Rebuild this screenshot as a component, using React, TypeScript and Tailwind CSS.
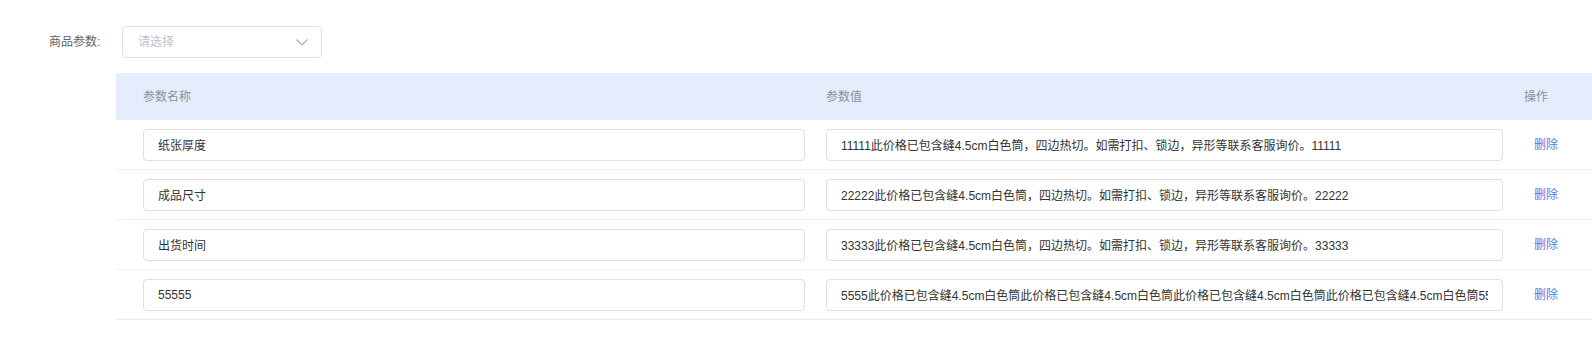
const rows = [
  { name: "纸张厚度", value: "11111此价格已包含缝4.5cm白色筒，四边热切。如需打扣、锁边，异形等联系客服询价。11111" },
  { name: "成品尺寸", value: "22222此价格已包含缝4.5cm白色筒，四边热切。如需打扣、锁边，异形等联系客服询价。22222" },
  { name: "出货时间", value: "33333此价格已包含缝4.5cm白色筒，四边热切。如需打扣、锁边，异形等联系客服询价。33333" },
  {
    name: "55555",
    value:
      "5555此价格已包含缝4.5cm白色筒此价格已包含缝4.5cm白色筒此价格已包含缝4.5cm白色筒此价格已包含缝4.5cm白色筒5555此价格已包含缝",
  },
];

export default function App() {
  return (
    <div
      className="w-[1592px] h-[337px] bg-white text-[12px] overflow-hidden"
      style={{ fontFamily: '"Liberation Sans", "Noto Sans CJK SC", sans-serif' }}
    >
      {/* select */}
      <div className="flex items-center pt-[26px] pl-[49px]">
        <span className="text-[#606266] w-[73px]">商品参数:</span>
        <div className="w-[200px] h-[32px] border border-[#dcdfe6] rounded-[4px] flex items-center justify-between pl-[15px] pr-[12px]">
          <span className="text-[#c0c4cc]">请选择</span>
          <svg width="14" height="14" viewBox="0 0 14 14" fill="none">
            <path d="M1.5 4.5 7 10l5.5-5.5" stroke="#a8abb2" strokeWidth="1.2" />
          </svg>
        </div>
      </div>

      {/* table */}
      <div className="ml-[116px] mt-[15px]">
        <div className="flex items-center h-[47px] bg-[#e5edfc] text-[#8c8f96]">
          <div className="w-[700px] pl-[27px]">参数名称</div>
          <div className="w-[708px] pl-[10px]">参数值</div>
          <div>操作</div>
        </div>
        {rows.map((row, i) => (
          <div key={i} className="flex items-center h-[50px] border-b border-[#ebeef5]">
            <div className="w-[700px] pl-[27px]">
              <input
                readOnly
                value={row.name}
                className="w-[662px] h-[32px] border border-[#dcdfe6] rounded-[4px] px-[14px] text-[#333] outline-none"
              />
            </div>
            <div className="w-[708px] pl-[10px]">
              <input
                readOnly
                value={row.value}
                className="w-[677px] h-[32px] border border-[#dcdfe6] rounded-[4px] px-[14px] text-[#333] outline-none"
              />
            </div>
            <div className="pl-[10px] text-[#4d7fe6] cursor-pointer">删除</div>
          </div>
        ))}
      </div>
    </div>
  );
}
